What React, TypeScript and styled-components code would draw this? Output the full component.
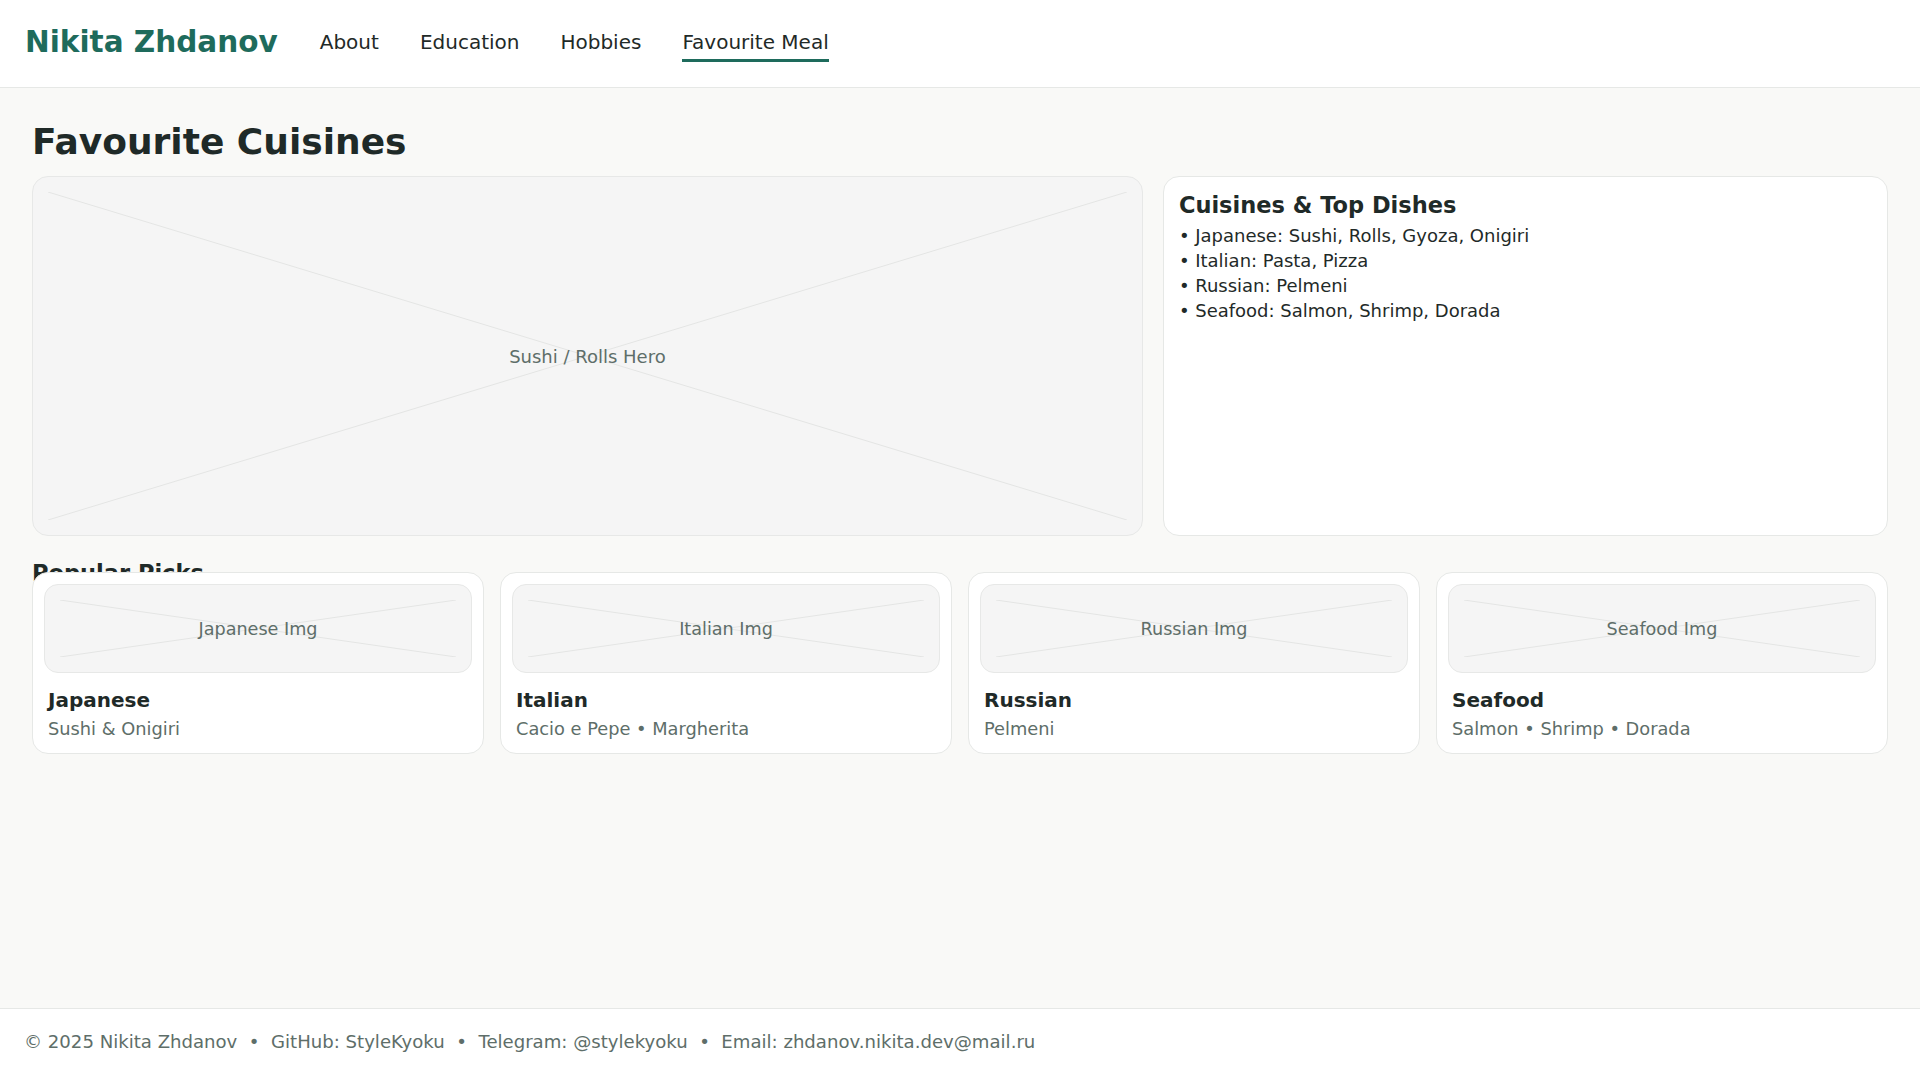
import React from 'react';
import styled, { createGlobalStyle } from 'styled-components';

const GlobalStyle = createGlobalStyle`
  * { box-sizing: border-box; }
  html, body { margin: 0; padding: 0; }
  body {
    background: #f9f9f7;
    color: #1f2a28;
    font-family: 'DejaVu Sans', 'Liberation Sans', sans-serif;
  }
`;

const Page = styled.div`
  min-height: 100vh;
  display: flex;
  flex-direction: column;
`;

const Header = styled.header`
  height: 88px;
  display: flex;
  align-items: center;
  padding: 0 25px;
  background: #ffffff;
  border-bottom: 1px solid #e6e8e6;
`;

const Brand = styled.div`
  font-size: 29.5px;
  font-weight: 700;
  line-height: 1.2;
  color: #1e6b5c;
  margin-top: -1px;
`;

const Nav = styled.nav`
  display: flex;
  gap: 41px;
  margin-left: 42px;
  margin-top: -2px;
`;

const NavLink = styled.a<{ $active?: boolean }>`
  font-size: 20px;
  line-height: 30px;
  padding: 3px 0 2px;
  color: #1f2a28;
  text-decoration: none;
  border-bottom: 3px solid ${(p) => (p.$active ? '#1e6b5c' : 'transparent')};
  cursor: pointer;
`;

const Main = styled.main`
  flex: 1;
  padding: 0 32px 40px;
`;

const Title = styled.h1`
  margin: 32px 0 13px;
  font-size: 36px;
  line-height: 1.2;
  font-weight: 700;
  color: #1f2a28;
`;

const TopGrid = styled.section`
  display: grid;
  grid-template-columns: 1.532fr 1fr;
  gap: 20px;
`;

const Placeholder = styled.div<{ $height: number; $radius: number; $size: number }>`
  position: relative;
  height: ${(p) => p.$height}px;
  border-radius: ${(p) => p.$radius}px;
  background: #f5f5f5;
  border: 1px solid #e7e8e7;
  display: flex;
  align-items: center;
  justify-content: center;
  color: #5e6e69;
  font-size: ${(p) => p.$size}px;
  overflow: hidden;
`;

const Cross = styled.svg`
  position: absolute;
  top: 15px;
  left: 15px;
  width: calc(100% - 30px);
  height: calc(100% - 30px);
`;

const PlaceholderLabel = styled.span`
  position: relative;
`;

const SideCard = styled.aside`
  background: #ffffff;
  border: 1px solid #e6e8e6;
  border-radius: 16px;
  padding: 15px;
`;

const SideTitle = styled.h3`
  margin: 0 0 4px;
  font-size: 22.5px;
  line-height: 1.2;
  font-weight: 700;
  color: #1f2a28;
`;

const DishList = styled.ul`
  list-style: none;
  margin: 0;
  padding: 0;
`;

const DishItem = styled.li`
  font-size: 18px;
  line-height: 25px;
  color: #1f2a28;
`;

const SectionTitle = styled.h2`
  margin: 24px 0 0;
  height: 12px;
  font-size: 22.5px;
  line-height: 1.2;
  font-weight: 700;
  color: #1f2a28;
`;

const CardGrid = styled.section`
  display: grid;
  grid-template-columns: repeat(4, 1fr);
  gap: 16px;
`;

const Card = styled.article`
  position: relative;
  background: #ffffff;
  border: 1px solid #e6e8e6;
  border-radius: 16px;
  padding: 11px;
`;

const CardBody = styled.div`
  padding: 0 4px;
  margin-top: 14px;
`;

const CardTitle = styled.h4`
  margin: 0;
  font-size: 20px;
  line-height: 26px;
  font-weight: 700;
  color: #1f2a28;
`;

const CardText = styled.p`
  margin: 4px 0 0;
  font-size: 17.8px;
  line-height: 24.6px;
  color: #5e6e69;
`;

const Footer = styled.footer`
  height: 72px;
  display: flex;
  align-items: center;
  padding: 0 24px 6px;
  background: #ffffff;
  border-top: 1px solid #e6e8e6;
  font-size: 18.1px;
  color: #5e6e69;
  white-space: pre;
`;

const Sep = styled.span`
  margin: 0 11.5px;
`;

const ImageStub: React.FC<{ label: string; height: number; radius: number; size: number }> = ({
  label,
  height,
  radius,
  size,
}) => (
  <Placeholder $height={height} $radius={radius} $size={size}>
    <Cross viewBox="0 0 100 100" preserveAspectRatio="none">
      <line x1="0" y1="0" x2="100" y2="100" stroke="#e4e5e4" strokeWidth="1" vectorEffect="non-scaling-stroke" />
      <line x1="100" y1="0" x2="0" y2="100" stroke="#e4e5e4" strokeWidth="1" vectorEffect="non-scaling-stroke" />
    </Cross>
    <PlaceholderLabel>{label}</PlaceholderLabel>
  </Placeholder>
);

const dishes = [
  'Japanese: Sushi, Rolls, Gyoza, Onigiri',
  'Italian: Pasta, Pizza',
  'Russian: Pelmeni',
  'Seafood: Salmon, Shrimp, Dorada',
];

const picks = [
  { name: 'Japanese', text: 'Sushi & Onigiri' },
  { name: 'Italian', text: 'Cacio e Pepe • Margherita' },
  { name: 'Russian', text: 'Pelmeni' },
  { name: 'Seafood', text: 'Salmon • Shrimp • Dorada' },
];

const contacts = ['© 2025 Nikita Zhdanov', 'GitHub: StyleKyoku', 'Telegram: @stylekyoku', 'Email: zhdanov.nikita.dev@mail.ru'];

const App: React.FC = () => {
  return (
    <>
      <GlobalStyle />
      <Page>
        <Header>
          <Brand>Nikita Zhdanov</Brand>
          <Nav>
            <NavLink>About</NavLink>
            <NavLink>Education</NavLink>
            <NavLink>Hobbies</NavLink>
            <NavLink $active>Favourite Meal</NavLink>
          </Nav>
        </Header>

        <Main>
          <Title>Favourite Cuisines</Title>
          <TopGrid>
            <ImageStub label="Sushi / Rolls Hero" height={360} radius={16} size={18} />
            <SideCard>
              <SideTitle>Cuisines &amp; Top Dishes</SideTitle>
              <DishList>
                {dishes.map((d) => (
                  <DishItem key={d}>• {d}</DishItem>
                ))}
              </DishList>
            </SideCard>
          </TopGrid>

          <SectionTitle>Popular Picks</SectionTitle>
          <CardGrid>
            {picks.map((p) => (
              <Card key={p.name}>
                <ImageStub label={`${p.name} Img`} height={89} radius={14} size={17.6} />
                <CardBody>
                  <CardTitle>{p.name}</CardTitle>
                  <CardText>{p.text}</CardText>
                </CardBody>
              </Card>
            ))}
          </CardGrid>
        </Main>

        <Footer>
          {contacts.map((c, i) => (
            <React.Fragment key={c}>
              {i > 0 && <Sep>•</Sep>}
              {c}
            </React.Fragment>
          ))}
        </Footer>
      </Page>
    </>
  );
};

export default App;
